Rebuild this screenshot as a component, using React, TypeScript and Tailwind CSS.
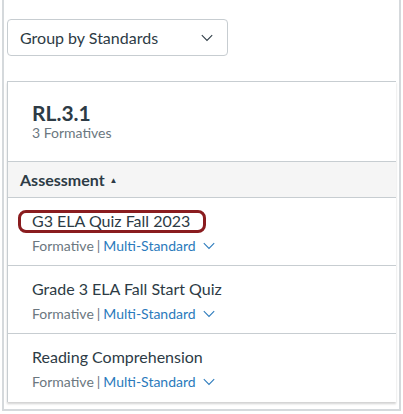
import React from 'react'

const rows = ['G3 ELA Quiz Fall 2023', 'Grade 3 ELA Fall Start Quiz', 'Reading Comprehension']

const Chevron = ({ className }: { className?: string }) => (
  <svg viewBox="0 0 16 10" fill="none" className={className}>
    <path d="M1.5 1.5 8 8l6.5-6.5" stroke="currentColor" strokeWidth="1.3" />
  </svg>
)

export default function App() {
  return (
    <div className="h-[414px] w-[403px] overflow-hidden bg-white font-['Lato','Liberation_Sans',sans-serif] text-[#2d3b45]">
      <div className="ml-[2px] h-[411px] w-[399px] border-x-2 border-b-2 border-[#d5d9dc] pl-[3px] pr-[3px] pt-[19px]">
        {/* Grouping select */}
        <button className="flex h-[37px] w-[221px] items-center justify-between rounded-[4px] border border-[#c7cdd1] pl-[12px] pr-[13px] text-[16px]">
          <span>Group by Standards</span>
          <Chevron className="h-[8px] w-[14px] text-[#2d3b45]" />
        </button>

        {/* Standard card */}
        <div className="mt-[25px] w-[389px] border-l border-t border-[#c7cdd1] shadow-[0_2px_2px_rgba(0,0,0,0.18)]">
          <div className="h-[79px] pl-[24px] pt-[18px]">
            <div className="text-[21px] font-bold leading-[25px]">RL.3.1</div>
            <div className="text-[14px] leading-[16px] text-[#6b7780]">3 Formatives</div>
          </div>
          <div className="flex h-[37px] items-center gap-[5px] border-y border-[#c7cdd1] bg-[#f5f5f5] pl-[12px] text-[16px] font-bold">
            Assessment
            <span className="text-[8px]">▲</span>
          </div>
          {rows.map((title, i) => (
            <div
              key={title}
              className={`pl-[24px] pt-[11px] ${i < rows.length - 1 ? 'h-[68px] border-b border-[#c7cdd1]' : 'h-[68px]'}`}
            >
              <div className="relative inline-block text-[16px] leading-[20px]">
                {title}
                {i === 0 && (
                  <span className="absolute -bottom-[2px] -left-[14px] -right-[16px] -top-[1px] rounded-[8px] border-[3px] border-[#8a1c1f]" />
                )}
              </div>
              <div className="mt-[4px] flex items-center text-[14px] leading-[18px]">
                <span className="text-[#6b7780]">Formative</span>
                <span className="mx-[3px] text-[#6b7780]">|</span>
                <span className="text-[#2b7abc]">Multi-Standard</span>
                <Chevron className="ml-[6px] h-[8px] w-[14px] text-[#2b7abc]" />
              </div>
            </div>
          ))}
        </div>
      </div>
    </div>
  )
}
